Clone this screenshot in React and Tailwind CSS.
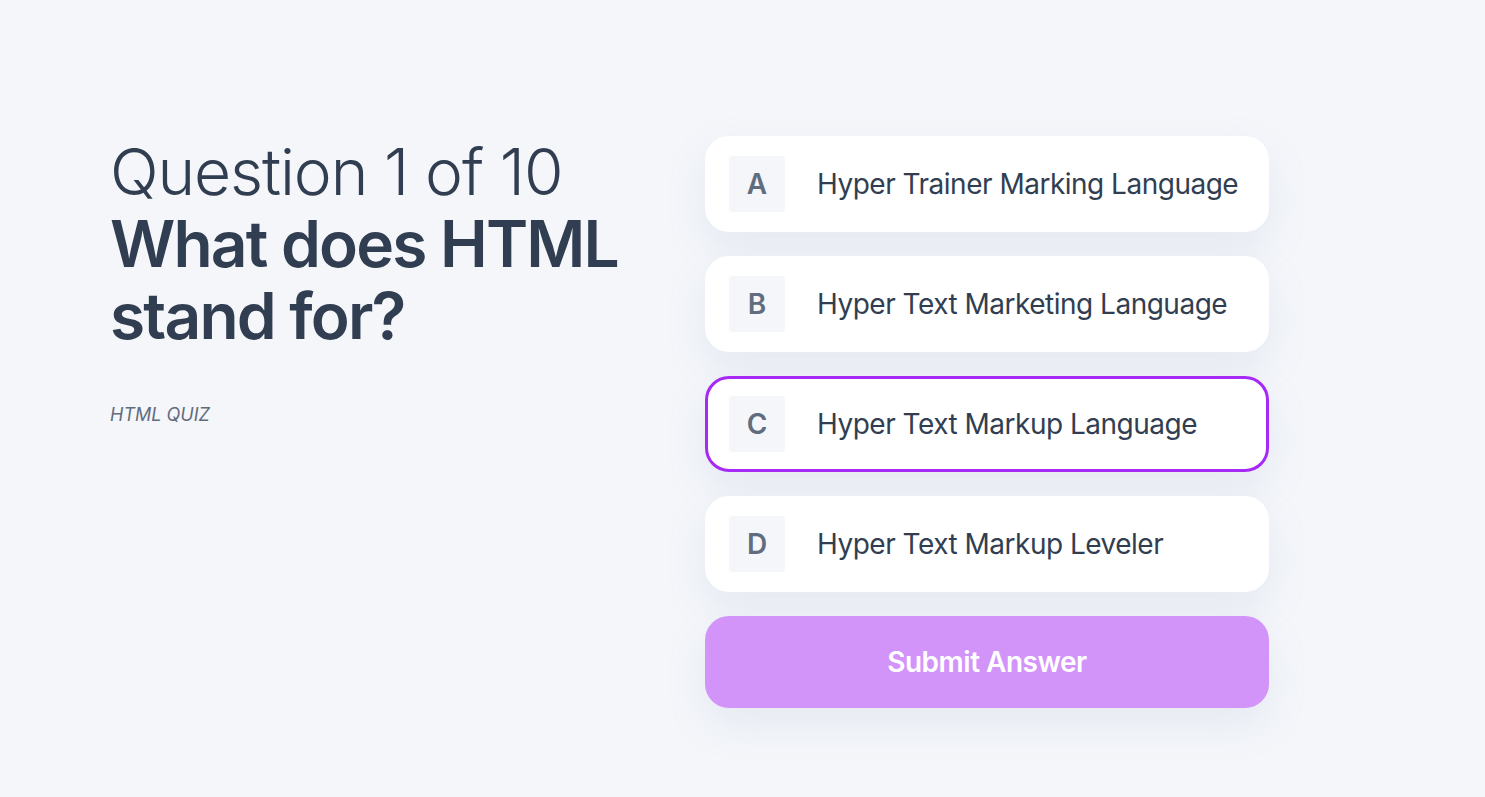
const options = [
  { letter: 'A', text: 'Hyper Trainer Marking Language' },
  { letter: 'B', text: 'Hyper Text Marketing Language' },
  { letter: 'C', text: 'Hyper Text Markup Language' },
  { letter: 'D', text: 'Hyper Text Markup Leveler' },
];

export default function App() {
  const selected = 'C';

  return (
    <div
      className="min-h-screen bg-[#f4f6fa] text-[#313e51]"
      style={{ fontFamily: 'Inter, "Noto Sans", sans-serif' }}
    >
      <div className="flex pl-[110px] pt-[136px]">
        {/* Question */}
        <div className="w-[595px]">
          <h1 className="text-[64px] leading-[72px]">
            <span className="block font-light tracking-[-1.1px]">Question 1 of 10</span>
            <span className="block font-semibold tracking-[-1.8px]">What does HTML stand for?</span>
          </h1>
          <p className="mt-[49px] text-[18px] italic text-[#626c7f]">HTML QUIZ</p>
        </div>

        {/* Options */}
        <div className="flex w-[564px] flex-col gap-6">
          {options.map((opt) => (
            <button
              key={opt.letter}
              className={`flex h-24 items-center gap-8 rounded-3xl bg-white px-6 text-left shadow-[0_16px_40px_rgba(143,160,193,0.14)] ${
                selected === opt.letter ? 'border-[3px] border-[#a729f5] px-[21px]' : ''
              }`}
            >
              <span className="flex h-14 w-14 shrink-0 items-center justify-center rounded bg-[#f4f6fa] text-[28px] font-semibold text-[#626c7f]">
                {opt.letter}
              </span>
              <span className="whitespace-nowrap text-[28px] font-normal tracking-[-0.5px] text-[#313e51]">
                {opt.text}
              </span>
            </button>
          ))}
          <button className="flex h-[92px] items-center justify-center rounded-3xl bg-[#d394fa] text-[28px] font-semibold tracking-[-0.5px] text-white shadow-[0_16px_40px_rgba(143,160,193,0.14)]">
            Submit Answer
          </button>
        </div>
      </div>
    </div>
  );
}
